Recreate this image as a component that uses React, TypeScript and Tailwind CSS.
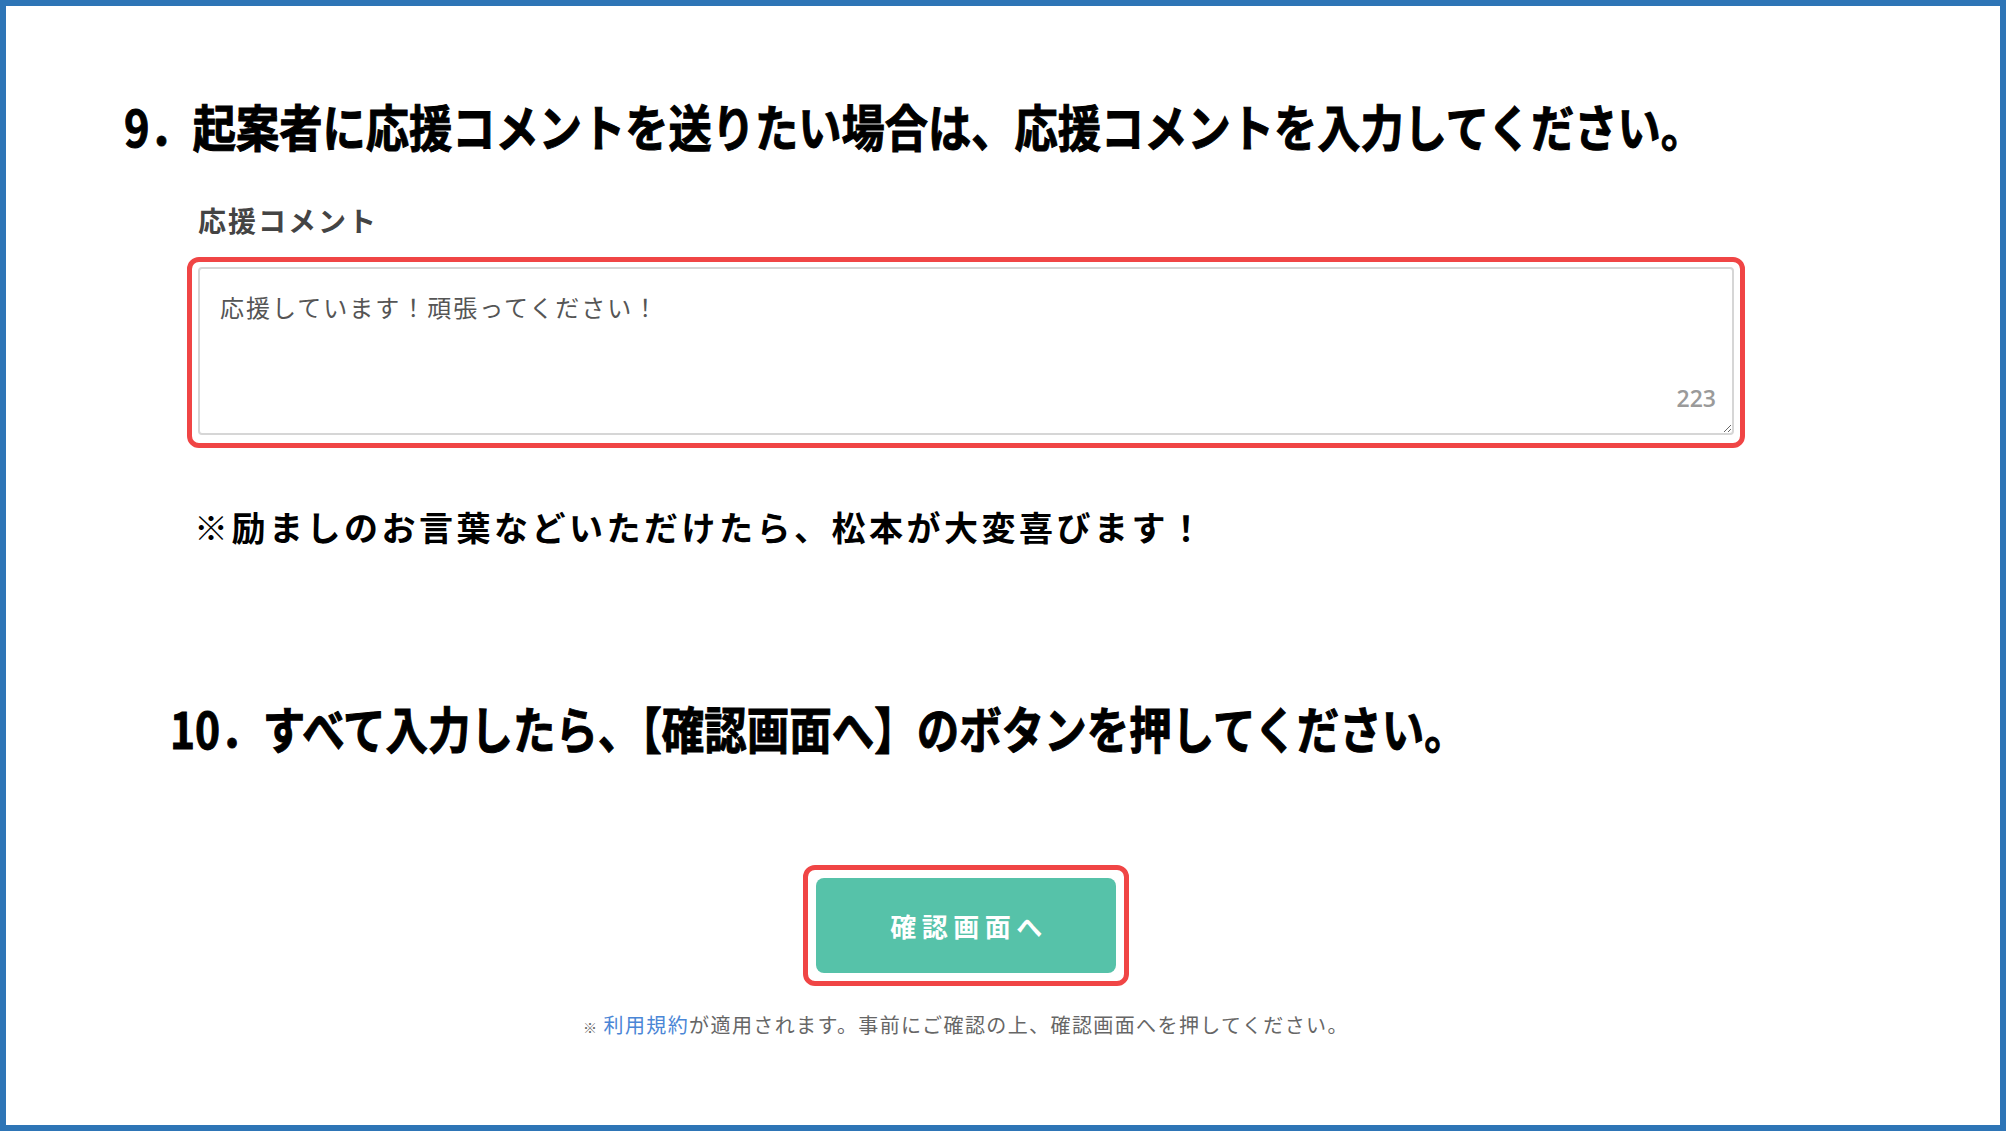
import React from 'react';

const JP = "font-['Noto_Sans_CJK_JP','Noto_Sans',sans-serif]";

const App: React.FC = () => {
  return (
    <div className={`h-[1131px] w-full border-[6px] border-[#2e75b6] bg-white overflow-hidden ${JP}`}>
      {/* step 9 */}
      <div className="pt-[89px] pl-[118px] h-[149px]">
        <h1 className="inline-block origin-left scale-x-[0.865] text-[50px] leading-[60px] font-bold text-black whitespace-nowrap [-webkit-text-stroke:1px_black]">
          9．起案者に応援コメントを送りたい場合は、応援コメントを入力してください。
        </h1>
      </div>

      <div className="ml-[192px] mt-[47px] text-[28px] leading-[36px] font-bold tracking-[2px] text-[#444]">
        応援コメント
      </div>

      <div className="ml-[181px] mt-[19px] w-[1558px] rounded-[12px] border-[5px] border-[#f04545] px-[6px] pt-[5px] pb-[8px]">
        <div className="relative">
          <textarea
            readOnly
            defaultValue="応援しています！頑張ってください！"
            className={`block h-[168px] w-full rounded-[4px] border-2 border-[#d6d6d6] bg-white pl-[20px] pt-[23px] text-[24px] leading-[30px] tracking-[2px] text-[#555] outline-none resize ${JP}`}
          />
          <span className="absolute right-[18px] bottom-[20px] font-['Open_Sans',sans-serif] text-[23px] font-semibold text-[#9a9a9a]">
            223
          </span>
        </div>
      </div>

      <div className="ml-[188px] mt-[57px] text-[34px] leading-[44px] font-bold tracking-[3.5px] text-black whitespace-nowrap">
        ※励ましのお言葉などいただけたら、松本が大変喜びます！
      </div>

      {/* step 10 */}
      <div className="ml-[164px] mt-[148px] h-[60px]">
        <h2 className="inline-block origin-left scale-x-[0.85] text-[50px] leading-[60px] font-bold text-black whitespace-nowrap [-webkit-text-stroke:1px_black]">
          10．すべて入力したら、【確認画面へ】のボタンを押してください。
        </h2>
      </div>

      <div className="ml-[181px] w-[1558px] mt-[108px] flex flex-col items-center">
        <div className="rounded-[12px] border-[5px] border-[#f04545] p-[8px]">
          <button className="flex h-[95px] w-[300px] items-center justify-center rounded-[8px] bg-[#56c2a9] pl-[6px] text-[26px] font-bold tracking-[5.5px] text-white">
            確認画面へ
          </button>
        </div>
        <p className="mt-[25px] text-[20px] leading-[28px] tracking-[1.4px] text-[#666] whitespace-nowrap">
          <span className="text-[14px] mr-[5px]">※</span>
          <span className="text-[#4a86d6]">利用規約</span>が適用されます。事前にご確認の上、確認画面へを押してください。
        </p>
      </div>
    </div>
  );
};

export default App;
